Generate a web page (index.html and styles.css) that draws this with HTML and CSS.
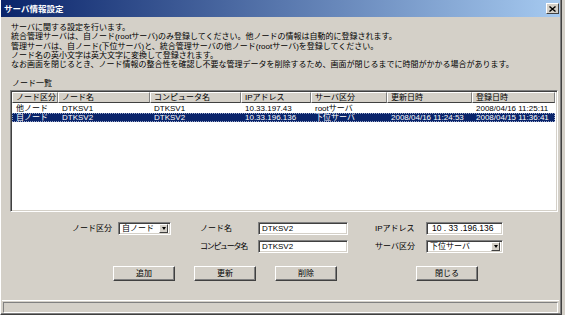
FILE: index.html
```html
<!DOCTYPE html>
<html lang="ja">
<head>
    <meta charset="UTF-8">
    <title>サーバ情報設定</title>
    <link rel="stylesheet" href="styles.css">
</head>
<body>
    <div class="window">
        <!-- タイトルバー -->
        <div class="titlebar">
            <span class="title">サーバ情報設定</span>
            <span class="close-btn">
                <svg width="7" height="6" viewBox="0 0 7 6"><path d="M0.5 0.5 L6.5 5.5 M6.5 0.5 L0.5 5.5" stroke="#000" stroke-width="1.4"/></svg>
            </span>
        </div>

        <div class="content">
            <!-- 説明 -->
            <div class="desc">
                サーバに関する設定を行います。<br>
                統合管理サーバは、自ノード(rootサーバ)のみ登録してください。他ノードの情報は自動的に登録されます。<br>
                管理サーバは、自ノード(下位サーバ)と、統合管理サーバの他ノード(rootサーバ)を登録してください。<br>
                ノード名の英小文字は英大文字に変換して登録されます。<br>
                なお画面を閉じるとき、ノード情報の整合性を確認し不要な管理データを削除するため、画面が閉じるまでに時間がかかる場合があります。
            </div>

            <div class="group-label">ノード一覧</div>

            <!-- ノード一覧 -->
            <div class="listview">
                <table class="list-table">
                    <colgroup>
                        <col style="width:46px">
                        <col style="width:92px">
                        <col style="width:91px">
                        <col style="width:70px">
                        <col style="width:76px">
                        <col style="width:85px">
                        <col style="width:83px">
                    </colgroup>
                    <thead>
                        <tr>
                            <th>ノード区分</th>
                            <th>ノード名</th>
                            <th>コンピュータ名</th>
                            <th>IPアドレス</th>
                            <th>サーバ区分</th>
                            <th>更新日時</th>
                            <th>登録日時</th>
                        </tr>
                    </thead>
                    <tbody>
                        <tr>
                            <td>他ノード</td>
                            <td>DTKSV1</td>
                            <td>DTKSV1</td>
                            <td>10.33.197.43</td>
                            <td>rootサーバ</td>
                            <td></td>
                            <td>2008/04/16 11:25:11</td>
                        </tr>
                        <tr class="selected">
                            <td>自ノード</td>
                            <td>DTKSV2</td>
                            <td>DTKSV2</td>
                            <td>10.33.196.136</td>
                            <td>下位サーバ</td>
                            <td>2008/04/16 11:24:53</td>
                            <td>2008/04/15 11:36:41</td>
                        </tr>
                    </tbody>
                </table>
            </div>

            <!-- 入力フォーム -->
            <div class="form">
                <span class="f-label f-label-right">ノード区分</span>
                <div class="sunken select col-2">
                    <span class="field-text">自ノード</span>
                    <span class="drop-btn"><span class="arrow"></span></span>
                </div>
                <span class="f-label col-4">ノード名</span>
                <div class="sunken col-5"><span class="field-text">DTKSV2</span></div>
                <span class="f-label col-7">IPアドレス</span>
                <div class="sunken col-8"><span class="field-text ip">10 . 33 .196.136</span></div>

                <span class="f-label narrow col-4">コンピュータ名</span>
                <div class="sunken col-5"><span class="field-text">DTKSV2</span></div>
                <span class="f-label col-7">サーバ区分</span>
                <div class="sunken select col-8">
                    <span class="field-text">下位サーバ</span>
                    <span class="drop-btn"><span class="arrow"></span></span>
                </div>
            </div>

            <!-- ボタン -->
            <div class="buttons">
                <button class="btn">追加</button>
                <button class="btn">更新</button>
                <button class="btn">削除</button>
                <button class="btn btn-close">閉じる</button>
            </div>
        </div>

        <!-- ステータスバー -->
        <div class="statusbar">
            <div class="status-panel"></div>
        </div>
    </div>
</body>
</html>
```

FILE: styles.css
```css
/* Windows クラシック風ダイアログ */
body {
    margin: 0;
    width: 565px;
    height: 315px;
    overflow: hidden;
    background: #d4d0c8;
    font-family: "Liberation Sans", "Noto Sans CJK JP", sans-serif;
    font-size: 8px;
    color: #000;
}

.window {
    box-sizing: border-box;
    width: 562px;
    height: 315px;
    display: flex;
    flex-direction: column;
    border-left: 1px solid #fff;
    border-right: 1px solid #404040;
    border-bottom: 1px solid #404040;
    box-shadow: inset -1px -1px 0 #808080;
    background: #d4d0c8;
}

/* タイトルバー */
.titlebar {
    height: 17px;
    margin-right: 1px;
    display: flex;
    align-items: center;
    padding-left: 3px;
    background: linear-gradient(to right, #0a246a, #a6caf0);
}

.title {
    color: #fff;
    font-weight: bold;
    font-size: 8.5px;
    line-height: 10px;
}

.close-btn {
    margin-left: auto;
    margin-right: 1px;
    width: 11px;
    height: 9px;
    display: flex;
    align-items: center;
    justify-content: center;
    background: #d4d0c8;
    border-top: 1px solid #fff;
    border-left: 1px solid #fff;
    border-right: 1px solid #404040;
    border-bottom: 1px solid #404040;
}

/* 本体 */
.content {
    flex: 1;
}

.desc {
    margin-top: 6px;
    padding-left: 10px;
    line-height: 9.25px;
    white-space: nowrap;
}

.group-label {
    margin-top: 10px;
    padding-left: 11px;
    line-height: 9px;
}

/* リストビュー */
.listview {
    box-sizing: border-box;
    margin: 2px 0 0 9px;
    width: 548px;
    height: 122px;
    background: #fff;
    border-top: 1px solid #808080;
    border-left: 1px solid #808080;
    border-right: 1px solid #fff;
    border-bottom: 1px solid #fff;
    box-shadow: inset 1px 1px 0 #404040, inset -1px -1px 0 #d4d0c8;
    padding: 1px;
    overflow: hidden;
}

.list-table {
    table-layout: fixed;
    border-collapse: separate;
    border-spacing: 0;
    width: 543px;
}

.list-table th {
    box-sizing: border-box;
    height: 11px;
    padding: 0 0 0 3px;
    font-weight: normal;
    text-align: left;
    line-height: 9px;
    background: #d4d0c8;
    border-top: 1px solid #fff;
    border-left: 1px solid #fff;
    border-right: 1px solid #808080;
    border-bottom: 1px solid #404040;
    white-space: nowrap;
    overflow: hidden;
}

.list-table td {
    height: 9px;
    padding: 0 0 0 4px;
    line-height: 9px;
    white-space: nowrap;
    overflow: hidden;
}

.list-table tbody tr:first-child td {
    padding-top: 1px;
}

.list-table tr.selected td {
    background: #0a246a;
    color: #fff;
}

.list-table tr.selected {
    outline: 1px dotted #9aa6c8;
    outline-offset: -1px;
}

/* 入力フォーム */
.form {
    margin-top: 10px;
    display: grid;
    grid-template-columns: 117px 53px 29px 58px 90px 27px 51px 77px;
    grid-template-rows: 13px 13px;
    row-gap: 5px;
    align-items: center;
}

.f-label {
    line-height: 9px;
    white-space: nowrap;
}

.f-label.narrow {
    letter-spacing: -1.3px;
}

.f-label-right {
    grid-column: 1;
    text-align: right;
    padding-right: 6px;
}

.col-2 { grid-column: 2; }
.col-4 { grid-column: 4; }
.col-5 { grid-column: 5; }
.col-7 { grid-column: 7; }
.col-8 { grid-column: 8; }

.sunken {
    box-sizing: border-box;
    height: 13px;
    display: flex;
    align-items: center;
    background: #fff;
    border-top: 1px solid #808080;
    border-left: 1px solid #808080;
    border-right: 1px solid #fff;
    border-bottom: 1px solid #fff;
    box-shadow: inset 1px 1px 0 #404040, inset -1px -1px 0 #d4d0c8;
    padding: 2px;
}

.field-text {
    line-height: 9px;
    padding-left: 1px;
    white-space: nowrap;
}

.field-text.ip {
    padding-left: 3px;
    font-size: 8.5px;
}

.select {
    justify-content: space-between;
}

.drop-btn {
    box-sizing: border-box;
    width: 9px;
    height: 9px;
    display: flex;
    align-items: center;
    justify-content: center;
    background: #d4d0c8;
    border-top: 1px solid #fff;
    border-left: 1px solid #fff;
    border-right: 1px solid #404040;
    border-bottom: 1px solid #404040;
}

.arrow {
    width: 0;
    height: 0;
    border-left: 2.5px solid transparent;
    border-right: 2.5px solid transparent;
    border-top: 3px solid #000;
}

/* ボタン */
.buttons {
    margin-top: 13px;
    padding-left: 112px;
    display: flex;
    gap: 19px;
}

.btn {
    box-sizing: border-box;
    width: 62px;
    height: 15px;
    padding: 0;
    font-family: inherit;
    font-size: 8px;
    line-height: 9px;
    color: #000;
    background: #d4d0c8;
    border-top: 1px solid #fff;
    border-left: 1px solid #fff;
    border-right: 1px solid #404040;
    border-bottom: 1px solid #404040;
    box-shadow: inset -1px -1px 0 #808080;
}

.btn-close {
    margin-left: 60px;
}

/* ステータスバー */
.statusbar {
    margin: 0 2px 1px 1px;
    padding-top: 1px;
    border-top: 1px solid #fff;
}

.status-panel {
    height: 9px;
    margin-left: 1px;
    margin-right: 1px;
    border-top: 1px solid #808080;
    border-left: 1px solid #808080;
    border-right: 1px solid #fff;
    border-bottom: 1px solid #fff;
}
```
